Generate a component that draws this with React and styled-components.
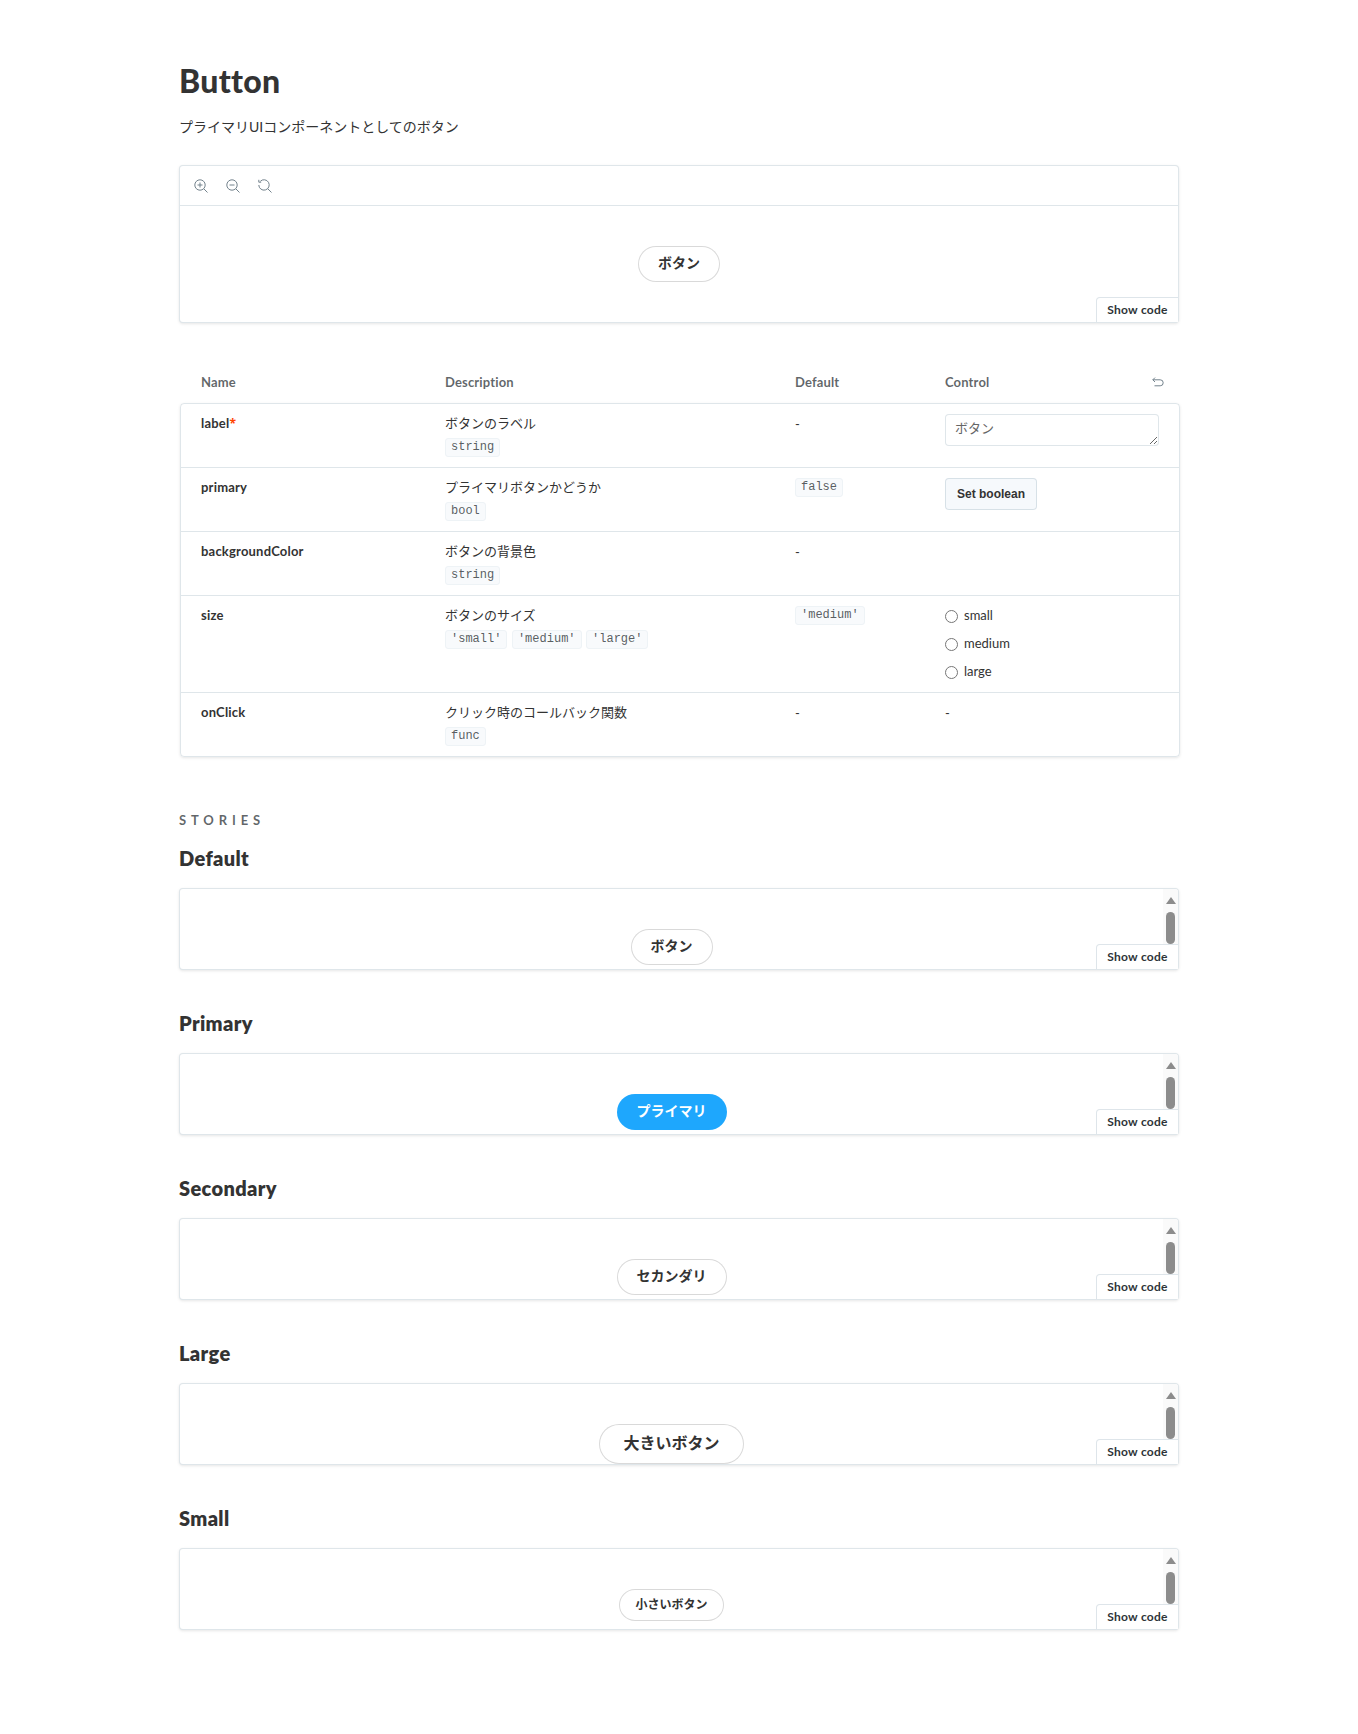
import React from "react";
import styled, { createGlobalStyle } from "styled-components";

const sans = `Lato, "Noto Sans CJK JP", sans-serif`;
const mono = `"Liberation Mono", monospace`;
const line = "hsla(203, 50%, 30%, 0.15)";

const Global = createGlobalStyle`
  html, body { margin: 0; padding: 0; background: #fff; }
  body { font-family: ${sans}; color: #333; -webkit-font-smoothing: antialiased; }
`;

const Page = styled.main`
  width: 1000px;
  margin: 0 auto;
  padding: 63px 0 104px;
`;
const Title = styled.h1`
  margin: 0 0 16px;
  font-size: 32px;
  line-height: 36px;
  font-weight: 900;
  letter-spacing: 0.3px;
  color: #333;
`;
const Subtitle = styled.p`
  margin: 0 0 26px;
  font-size: 14px;
  line-height: 24px;
  color: #333;
`;
const Preview = styled.section`
  position: relative;
  border: 1px solid ${line};
  border-radius: 4px;
  box-shadow: rgba(0, 0, 0, 0.1) 0 1px 3px 0;
  background: #fff;
`;
const Toolbar = styled.div`
  display: flex;
  align-items: center;
  gap: 18px;
  height: 39px;
  padding: 0 14px;
  border-bottom: 1px solid ${line};
`;
const ToolIcon = styled.svg`
  width: 14px;
  height: 14px;
  fill: none;
  stroke: #73828c;
  stroke-width: 1;
`;
const Canvas = styled.div`
  display: flex;
  justify-content: center;
  padding: 40px;
`;
const StoryCanvas = styled.div`
  height: 80px;
  box-sizing: border-box;
  overflow: hidden;
  padding: 40px 55px 0 40px;
  display: flex;
  justify-content: center;
  align-items: flex-start;
`;
const ScrollTrack = styled.div`
  position: absolute;
  top: 0;
  right: 0;
  bottom: 0;
  width: 15px;
  background: #fafafa;
  border-radius: 0 3px 0 0;
`;
const ScrollArrow = styled.div`
  position: absolute;
  top: 8px;
  left: 2.5px;
  width: 0;
  height: 0;
  border-left: 5px solid transparent;
  border-right: 5px solid transparent;
  border-bottom: 7px solid #8c8c8c;
`;
const ScrollThumb = styled.div`
  position: absolute;
  top: 23px;
  left: 3px;
  width: 9px;
  height: 32px;
  background: #8c8c8c;
  border-radius: 4.5px;
`;
const DemoButton = styled.button`
  flex: none;
  border: 0;
  border-radius: 3em;
  font-family: ${sans};
  font-weight: 700;
  line-height: 1;
  cursor: pointer;
  color: ${(p) => (p.$primary ? "#fff" : "#333")};
  background: ${(p) => (p.$primary ? "#1ea7fd" : "transparent")};
  box-shadow: ${(p) => (p.$primary ? "none" : "rgba(0, 0, 0, 0.15) 0 0 0 1px inset")};
  font-size: ${(p) => ({ small: 12, medium: 14, large: 16 }[p.$size])}px;
  padding: ${(p) => ({ small: "10px 16px", medium: "10px 20px 12px", large: "11px 24px 13px" }[p.$size])};
`;
const ShowCode = styled.button`
  position: absolute;
  right: 0;
  bottom: 0;
  width: 82px;
  height: 25px;
  padding: 0 0 2px;
  background: #fff;
  border: 1px solid ${line};
  border-width: 1px 0 0 1px;
  border-radius: 4px 0 0 0;
  font-family: ${sans};
  font-size: 12px;
  font-weight: 700;
  letter-spacing: 0.25px;
  color: #2e3438;
`;

const ArgsHead = styled.div`
  display: grid;
  grid-template-columns: 244px 350px 150px 1fr;
  align-items: center;
  height: 43px;
  margin: 37px 0 0 1px;
  padding: 0 21px;
  font-size: 13px;
  font-weight: 700;
  letter-spacing: 0.15px;
  color: rgba(46, 52, 56, 0.75);
`;
const HeadControl = styled.div`
  display: flex;
  justify-content: space-between;
  align-items: center;
`;
const UndoIcon = styled.svg`
  width: 12px;
  height: 10px;
  margin-right: -6px;
  fill: none;
  stroke: #73828c;
  stroke-width: 1;
`;
const ArgsTable = styled.div`
  width: 1000px;
  box-sizing: border-box;
  margin-left: 1px;
  border: 1px solid ${line};
  border-radius: 4px;
  box-shadow: rgba(0, 0, 0, 0.1) 0 1px 3px 0;
`;
const Row = styled.div`
  display: grid;
  grid-template-columns: 244px 350px 150px 1fr;
  padding: 10px 20px;
  font-size: 13px;
  line-height: 20px;
  color: #333;
  & + & { border-top: 1px solid ${line}; }
`;
const Name = styled.div`
  font-weight: 700;
  letter-spacing: 0.2px;
  line-height: 18px;
`;
const Star = styled.span`
  font-family: "Open Sans", sans-serif;
  font-size: 12px;
  color: #f40;
`;
const DescText = styled.div`
  line-height: 18px;
`;
const Tags = styled.div`
  display: flex;
  gap: 4.5px;
  margin-top: 6px;
`;
const Tag = styled.code`
  display: block;
  width: fit-content;
  box-sizing: border-box;
  height: 19px;
  padding: 0 5px;
  font-family: ${mono};
  font-size: 12px;
  line-height: 17px;
  color: rgba(46, 52, 56, 0.8);
  background: #f8fafc;
  border: 1px solid #eef3f6;
  border-radius: 3px;
`;
const TextArea = styled.textarea`
  display: block;
  box-sizing: border-box;
  width: 214px;
  height: 32px;
  margin: 0;
  padding: 4px 9px;
  font-family: ${sans};
  font-size: 13px;
  line-height: 18px;
  color: #666;
  border: 1px solid ${line};
  border-radius: 4px;
  outline: 0;
  resize: vertical;
`;
const BoolButton = styled.button`
  display: block;
  box-sizing: border-box;
  width: 92px;
  height: 32px;
  padding: 0;
  font-family: "Liberation Sans", sans-serif;
  font-size: 12px;
  font-weight: 700;
  color: #333;
  background: #f6f9fc;
  border: 1px solid ${line};
  border-radius: 4px;
`;
const RadioList = styled.div`
  display: flex;
  flex-direction: column;
  gap: 10px;
  padding-bottom: 2px;
`;
const RadioLabel = styled.label`
  display: flex;
  align-items: center;
  height: 18px;
`;
const Radio = styled.input`
  width: 13px;
  height: 13px;
  margin: 2px 6px 0 0;
`;

const Kicker = styled.h2`
  margin: 53px 0 0;
  font-size: 13px;
  line-height: 20px;
  font-weight: 700;
  letter-spacing: 0.375em;
  color: rgba(46, 52, 56, 0.75);
`;
const Story = styled.article`
  margin-top: ${(p) => (p.$first ? "14px" : "39px")};
`;
const StoryTitle = styled.h3`
  margin: 0 0 16px;
  font-size: 20px;
  line-height: 28px;
  font-weight: 800;
  letter-spacing: 0.35px;
  color: #333;
`;

const stories = [
  { title: "Default", label: "ボタン", size: "medium" },
  { title: "Primary", label: "プライマリ", size: "medium", primary: true },
  { title: "Secondary", label: "セカンダリ", size: "medium" },
  { title: "Large", label: "大きいボタン", size: "large" },
  { title: "Small", label: "小さいボタン", size: "small" },
];

export default function App() {
  return (
    <Page>
      <Global />
      <Title>Button</Title>
      <Subtitle>プライマリUIコンポーネントとしてのボタン</Subtitle>
      <Preview>
        <Toolbar>
          <ToolIcon viewBox="0 0 14 14">
            <circle cx="6" cy="6" r="5.2" />
            <path d="M9.8 9.8 13.5 13.5M3.5 6h5M6 3.5v5" />
          </ToolIcon>
          <ToolIcon viewBox="0 0 14 14">
            <circle cx="6" cy="6" r="5.2" />
            <path d="M9.8 9.8 13.5 13.5M3.5 6h5" />
          </ToolIcon>
          <ToolIcon viewBox="0 0 14 14">
            <path d="M2.3 2.3A5.2 5.2 0 1 1 .8 6M9.8 9.8 13.5 13.5M.8 .8v2.4h2.4" />
          </ToolIcon>
        </Toolbar>
        <Canvas>
          <DemoButton $size="medium">ボタン</DemoButton>
        </Canvas>
        <ShowCode>Show code</ShowCode>
      </Preview>

      <ArgsHead>
        <div>Name</div>
        <div>Description</div>
        <div>Default</div>
        <HeadControl>
          Control
          <UndoIcon viewBox="0 0 12 10">
            <path d="M3 .6 .8 2.8 3 5M.8 2.8h7.4a3 3 0 0 1 0 6H2.5" />
          </UndoIcon>
        </HeadControl>
      </ArgsHead>
      <ArgsTable>
        <Row>
          <Name>label<Star>*</Star></Name>
          <div>
            <DescText>ボタンのラベル</DescText>
            <Tags><Tag>string</Tag></Tags>
          </div>
          <div>-</div>
          <TextArea defaultValue="ボタン" />
        </Row>
        <Row>
          <Name>primary</Name>
          <div>
            <DescText>プライマリボタンかどうか</DescText>
            <Tags><Tag>bool</Tag></Tags>
          </div>
          <div><Tag>false</Tag></div>
          <div><BoolButton>Set boolean</BoolButton></div>
        </Row>
        <Row>
          <Name>backgroundColor</Name>
          <div>
            <DescText>ボタンの背景色</DescText>
            <Tags><Tag>string</Tag></Tags>
          </div>
          <div>-</div>
          <div />
        </Row>
        <Row>
          <Name>size</Name>
          <div>
            <DescText>ボタンのサイズ</DescText>
            <Tags>
              <Tag>'small'</Tag>
              <Tag>'medium'</Tag>
              <Tag>'large'</Tag>
            </Tags>
          </div>
          <div><Tag>'medium'</Tag></div>
          <RadioList>
            {["small", "medium", "large"].map((v) => (
              <RadioLabel key={v}>
                <Radio type="radio" name="size" />
                {v}
              </RadioLabel>
            ))}
          </RadioList>
        </Row>
        <Row>
          <Name>onClick</Name>
          <div>
            <DescText>クリック時のコールバック関数</DescText>
            <Tags><Tag>func</Tag></Tags>
          </div>
          <div>-</div>
          <div>-</div>
        </Row>
      </ArgsTable>

      <Kicker>STORIES</Kicker>
      {stories.map((s, i) => (
        <Story key={s.title} $first={i === 0}>
          <StoryTitle>{s.title}</StoryTitle>
          <Preview>
            <StoryCanvas>
              <DemoButton $size={s.size} $primary={s.primary}>{s.label}</DemoButton>
            </StoryCanvas>
            <ScrollTrack>
              <ScrollArrow />
              <ScrollThumb />
            </ScrollTrack>
            <ShowCode>Show code</ShowCode>
          </Preview>
        </Story>
      ))}
    </Page>
  );
}
